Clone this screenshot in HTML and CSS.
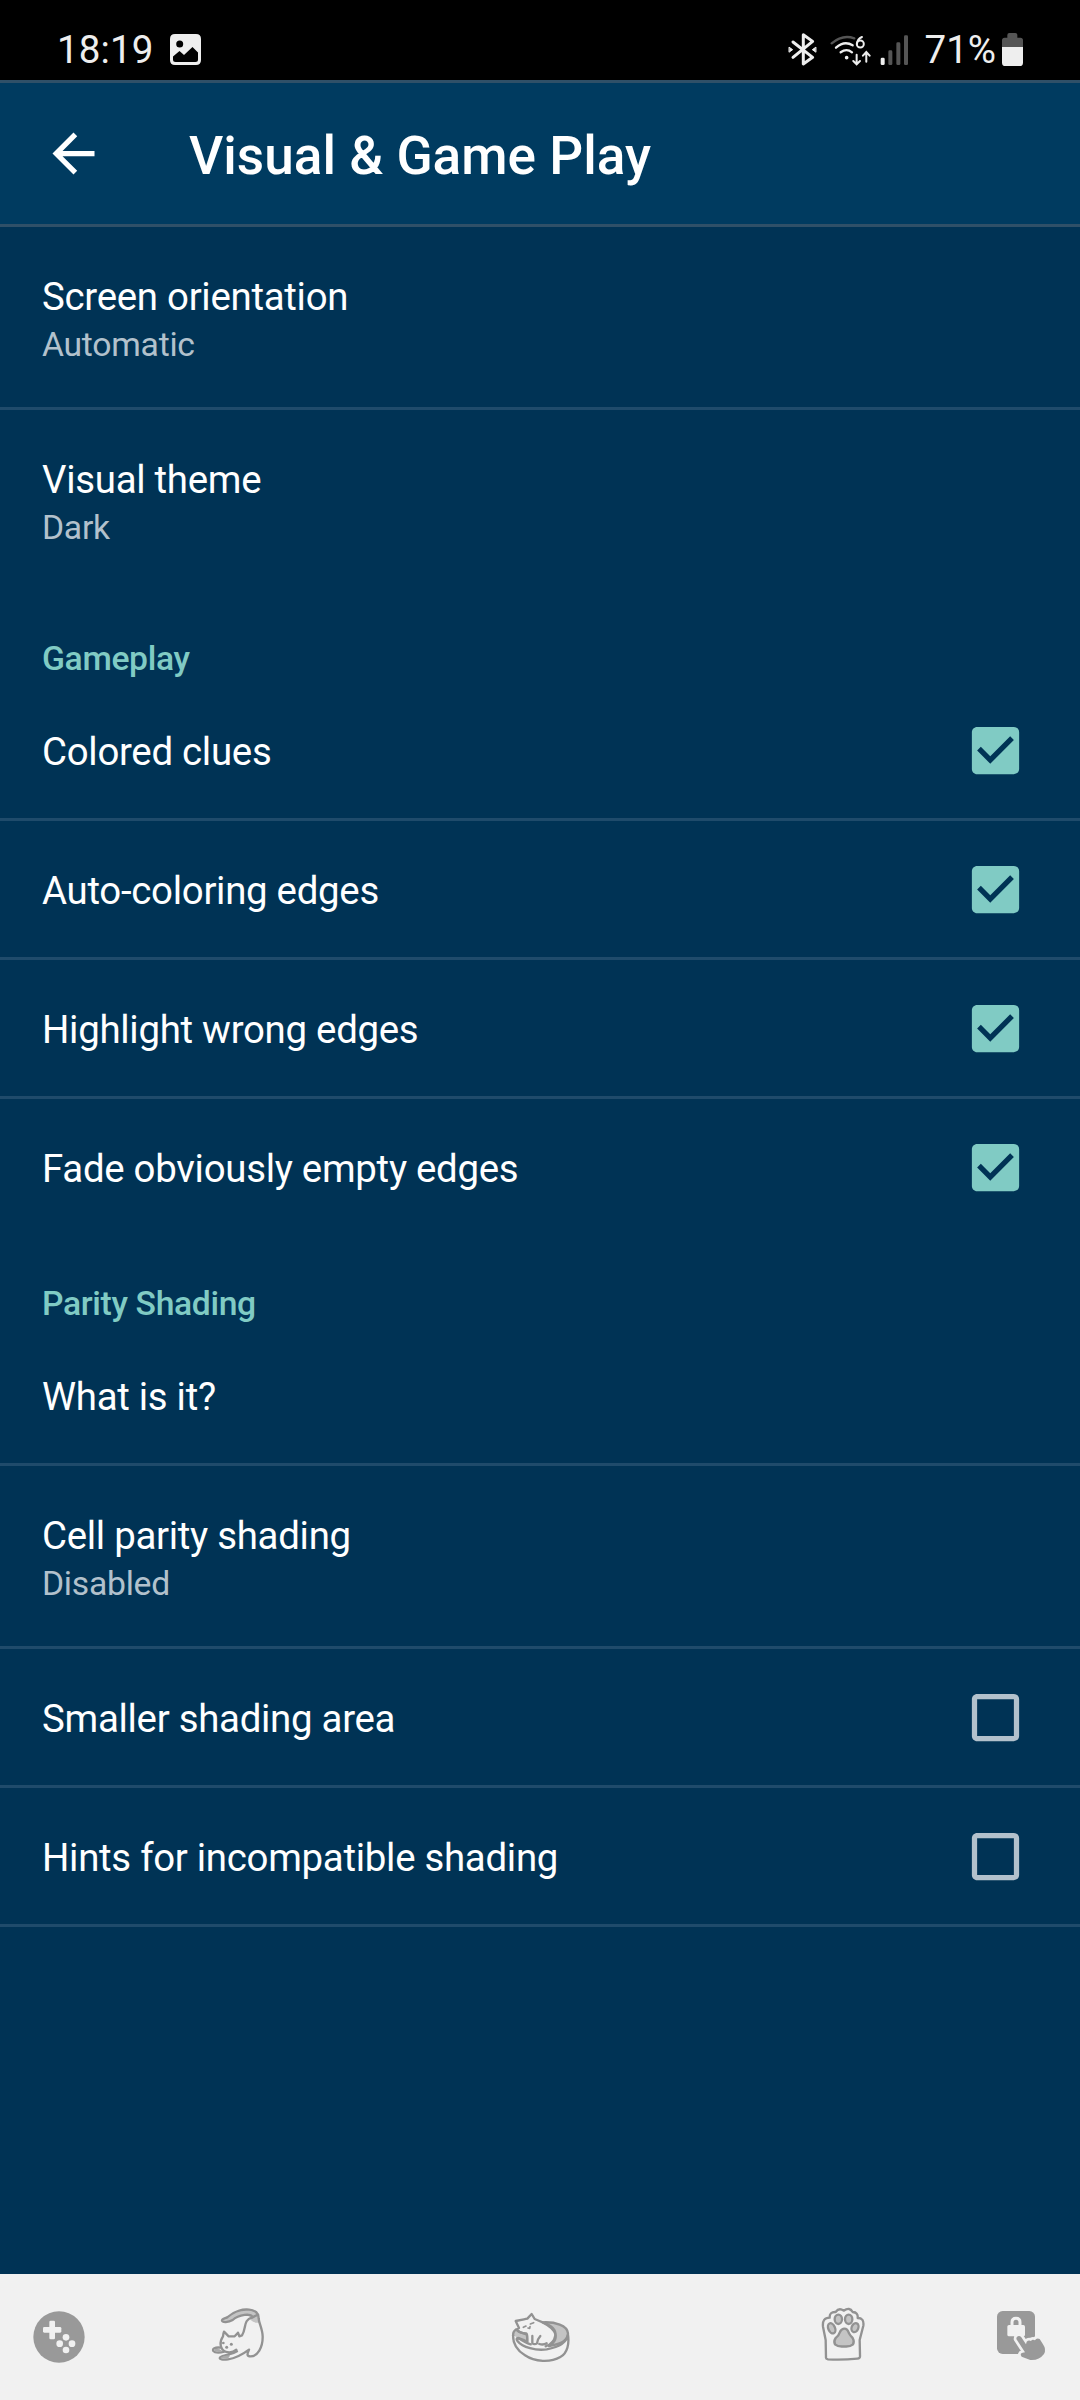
FILE: index.html
```html
<!DOCTYPE html>
<html lang="en">
<head>
<meta charset="utf-8">
<title>Visual &amp; Game Play</title>
<link rel="stylesheet" href="styles.css">
</head>
<body>
<div class="screen">
  <header class="status">
    <span class="status-text clock">18:19</span>
    <svg class="photo" viewBox="0 0 31 31"><path fill="#eee" fill-rule="evenodd" d="M5 0H26Q31 0 31 5V26Q31 31 26 31H5Q0 31 0 26V5Q0 0 5 0ZM9.700 6.500A3.500 3.500 0 1 0 9.700 13.500A3.500 3.500 0 1 0 9.700 6.500ZM3 22.500V25.500Q3 28 5.500 28H25.500Q28 28 28 25.500V18.500L22.500 13L14 21L9.500 17Z"/></svg>
    <div class="tray">
      <svg class="bluetooth" viewBox="84 96 88 104" fill="none" stroke="#eee" stroke-width="9" stroke-linejoin="round" stroke-linecap="round"><path d="M99 126L158 172L130 192V104L158 124L99 172"/><path fill="#eee" stroke-width="3" d="M88 142L98 149L88 156ZM167 142L157 149L167 156Z"/></svg>
      <svg class="wifi" viewBox="212 98 124 100" fill="none" stroke="#eee" stroke-width="7" stroke-linecap="round"><path stroke="#555" d="M217 129Q250 101 285 114"/><path d="M230 142Q255 120 280 135M244 156Q262 143 278 156"/><circle cx="262" cy="172" r="5.500" fill="#eee" stroke="none"/><path stroke-width="6" d="M308 110Q294 116 293 131"/><circle cx="303" cy="131" r="10.500" stroke-width="6"/><path stroke-width="6" d="M292 163V190M282 182L292 192L302 182M321 184V157M311 166L321 155L331 166"/></svg>
      <svg class="signal" viewBox="362 100 86 96"><rect x="364" y="171" width="12" height="22" rx="4" fill="#eee"/><g fill="#555"><rect x="387" y="149" width="12" height="44" rx="4"/><rect x="411" y="125" width="12" height="68" rx="4"/><rect x="434" y="104" width="12" height="89" rx="4"/></g></svg>
      <span class="status-text percent">71%</span>
      <svg class="battery" viewBox="726 99 63 99"><path fill="#555" d="M726 142V121Q726 113 734 113H742V105Q742 99 748 99H766Q772 99 772 105V113H781Q789 113 789 121V142Z"/><path fill="#eee" d="M726 141H789V188Q789 198 779 198H736Q726 198 726 188Z"/></svg>
    </div>
  </header>
  <div class="appbar">
    <svg class="back" viewBox="0 0 24 24"><path fill="#fff" d="M20 11H7.830l5.590-5.590L12 4l-8 8 8 8 1.410-1.410L7.830 13H20v-2z"/></svg>
    <h1 class="title">Visual &amp; Game Play</h1>
  </div>
  <main class="settings">
    <div class="row tall line"><div class="name">Screen orientation</div><div class="value">Automatic</div></div>
    <div class="row tall"><div class="name">Visual theme</div><div class="value">Dark</div></div>
    <h2 class="section">Gameplay</h2>
    <div class="row line"><div class="name">Colored clues</div><svg class="check on" viewBox="0 0 24 24"><path d="M19 3H5c-1.110 0-2 .9-2 2v14c0 1.100.89 2 2 2h14c1.110 0 2-.9 2-2V5c0-1.100-.89-2-2-2zm-9 14l-5-5 1.410-1.410L10 14.170l7.590-7.590L19 8l-9 9z"/></svg></div>
    <div class="row line"><div class="name">Auto-coloring edges</div><svg class="check on" viewBox="0 0 24 24"><path d="M19 3H5c-1.110 0-2 .9-2 2v14c0 1.100.89 2 2 2h14c1.110 0 2-.9 2-2V5c0-1.100-.89-2-2-2zm-9 14l-5-5 1.410-1.410L10 14.170l7.590-7.590L19 8l-9 9z"/></svg></div>
    <div class="row line"><div class="name">Highlight wrong edges</div><svg class="check on" viewBox="0 0 24 24"><path d="M19 3H5c-1.110 0-2 .9-2 2v14c0 1.100.89 2 2 2h14c1.110 0 2-.9 2-2V5c0-1.100-.89-2-2-2zm-9 14l-5-5 1.410-1.410L10 14.170l7.590-7.590L19 8l-9 9z"/></svg></div>
    <div class="row"><div class="name">Fade obviously empty edges</div><svg class="check on" viewBox="0 0 24 24"><path d="M19 3H5c-1.110 0-2 .9-2 2v14c0 1.100.89 2 2 2h14c1.110 0 2-.9 2-2V5c0-1.100-.89-2-2-2zm-9 14l-5-5 1.410-1.410L10 14.170l7.590-7.590L19 8l-9 9z"/></svg></div>
    <h2 class="section">Parity Shading</h2>
    <div class="row line"><div class="name">What is it?</div></div>
    <div class="row tall line"><div class="name">Cell parity shading</div><div class="value">Disabled</div></div>
    <div class="row line"><div class="name">Smaller shading area</div><svg class="check off" viewBox="0 0 24 24"><path d="M19 5v14H5V5h14m0-2H5c-1.100 0-2 .9-2 2v14c0 1.100.9 2 2 2h14c1.100 0 2-.9 2-2V5c0-1.100-.9-2-2-2z"/></svg></div>
    <div class="row line"><div class="name">Hints for incompatible shading</div><svg class="check off" viewBox="0 0 24 24"><path d="M19 5v14H5V5h14m0-2H5c-1.100 0-2 .9-2 2v14c0 1.100.9 2 2 2h14c1.100 0 2-.9 2-2V5c0-1.100-.9-2-2-2z"/></svg></div>
  </main>
  <nav class="navbar">
    <svg class="nav-icon" viewBox="87 141 180 180"><circle cx="177" cy="231" r="77" fill="#999"/><g fill="#f1f1f1"><rect x="148" y="182" width="17" height="56" rx="4"/><rect x="129" y="201" width="55" height="17" rx="4"/><circle cx="198" cy="232" r="10"/><circle cx="198" cy="270" r="10"/><circle cx="179" cy="251" r="10"/><circle cx="216" cy="251" r="10"/></g></svg>
    <svg class="nav-icon line-art" viewBox="624 141 180 180">
      <path class="shade-line" d="M745 162L774 162L776 188Q762 190 752 180Z"/>
      <path d="M774 164Q776 170 776 176C777 191 789 210 788 232C788 262 773 289 752 289C741 289 740 284 747 269C731 281 707 295 684 298C668 300 657 298 660 293C663 287 674 288 687 283"/>
      <path fill="#c4c4c4" d="M666 182C665 175 678 175 683 171C703 153 729 147 747 149Q768 151 774 164L757 172C757 158 715 164 698 180C685 188 667 188 666 182Z"/>
      <path d="M757 172C728 180 740 205 726 226L718 229L714 218L704 229H686L672 215Q670 219 669 229C657 246 660 267 676 275Q696 281 709 269M661 263C645 261 636 267 640 273C645 279 661 278 673 275M687 283Q700 281 711 274"/>
      <path class="shade" d="M641 270Q646 263 659 268L668 274Q650 280 641 270ZM661 294Q670 284 690 287L683 297Z"/>
      <g class="dots"><circle cx="670" cy="249" r="4"/><circle cx="694" cy="253" r="4.500"/><circle cx="680" cy="262" r="4.500"/></g>
    </svg>
    <svg class="nav-icon line-art" viewBox="90 81 180 180">
      <path fill="#c4c4c4" d="M188 127C225 125 262 136 264 160C264 187 229 195 207 198C218 192 231 179 226 162Q220 143 188 127Z"/>
      <path fill="#c4c4c4" d="M108 148Q97 156 100 169Q101 184 110 191Q106 176 118 175Q130 178 142 185L141 164L119 156Z"/>
      <path d="M110 149L117 144L107 123L132 118Q138 117 142 116L155 102L164 117Q177 122 188 127C216 136 229 151 226 166C223 184 211 194 197 199M110 149Q118 159 139 160Q143 166 141 188M157 168V190Q164 195 171 190Q172 178 181 168M178 192Q190 196 200 190"/>
      <path fill="#f1f1f1" d="M99 166C99 195 113 213 135 226C164 246 212 248 241 231C263 219 268 190 264 164C261 190 232 202 200 208C169 213 127 202 113 184Q106 175 115 174Q136 188 152 193"/>
      <path stroke-width="5" d="M130 142L138 138M151 132L161 128M144 144L149 145L150 140"/>
    </svg>
    <svg class="nav-icon line-art" viewBox="69 81 180 180">
      <path d="M108 234L107 180L99 140Q96 113 119 113Q118 95 137 96Q147 82 161 92Q179 80 188 96Q205 97 203 114Q223 114 220 137L209 180L210 226Q211 236 202 236Q158 240 114 238Q108 237 108 234Z"/>
      <g fill="#c4c4c4"><ellipse cx="145" cy="118" rx="11" ry="14"/><ellipse cx="176" cy="118" rx="11" ry="14"/><ellipse cx="125" cy="145" rx="10" ry="16" transform="rotate(-24 125 145)"/><ellipse cx="195" cy="143" rx="10" ry="14" transform="rotate(22 195 143)"/><path d="M162 146Q172 145 177 160Q181 168 188 174Q194 184 189 193Q180 201 162 199Q144 201 135 193Q130 184 137 174Q146 168 149 158Q153 147 162 146Z"/></g>
    </svg>
    <svg class="nav-icon" viewBox="606 81 180 180"><rect x="621" y="93" width="114" height="129" rx="17" fill="#999"/><path fill="none" stroke="#f1f1f1" stroke-width="9" d="M666 140V127Q666 115 678 115Q690 115 690 127V140"/><rect x="652" y="135" width="53" height="34" rx="5" fill="#f1f1f1"/><path fill="#999" stroke="#f1f1f1" stroke-width="16" stroke-linejoin="round" paint-order="stroke" d="M680 172Q687 164 694 172L708 193L710 185Q716 179 723 183Q727 177 735 181Q739 173 749 177L758 191Q770 208 762 222Q747 242 721 240L695 230Q688 220 698 218L705 217L679 177Z"/></svg>
  </nav>
</div>
</body>
</html>
```
FILE: styles.css
```css
* { box-sizing: border-box; }
body { margin: 0; background: #003355; font-family: Roboto, sans-serif; }
svg { display: block; flex: none; }
.screen { width: 1080px; height: 2400px; display: flex; flex-direction: column; background: #003355; color: #fff; }
.status { height: 80px; background: #000; display: flex; align-items: center; padding: 19px 57px 0 57px; }
.status-text { font-size: 38.5px; line-height: 44px; color: #eee; }
.clock { width: 113px; letter-spacing: 0.1px; }
.photo { width: 31px; height: 31px; }
.tray { display: flex; align-items: center; margin-left: auto; }
.bluetooth { width: 29.300px; height: 34.700px; }
.wifi { width: 41.300px; height: 33.300px; margin-left: 13.300px; }
.signal { width: 28.700px; height: 32px; margin-left: 8.700px; }
.percent { margin-left: 15.700px; }
.battery { width: 21px; height: 33px; margin-left: 6px; }
.appbar { height: 147px; background: #003b60; border-top: 3px solid #2f5068; border-bottom: 3px solid #2f5068; display: flex; align-items: center; padding-left: 42px; }
.back { width: 63px; height: 63px; }
.title { margin: 4px 0 0 84px; font-size: 53.150px; font-weight: 500; line-height: 62px; }
.settings { flex: 1; }
.row { height: 136px; padding: 0 52px 0 42px; display: flex; align-items: center; justify-content: space-between; }
.row.line { height: 139px; border-bottom: 3px solid #1f4b6b; }
.row.tall { height: 180px; flex-direction: column; align-items: flex-start; justify-content: center; padding-top: 2px; }
.row.tall.line { height: 183px; }
.name { font-size: 38.400px; letter-spacing: -0.280px; line-height: 50px; padding-top: 4px; }
.tall .name { padding: 2px 0 1px; }
.value { font-size: 33.700px; letter-spacing: -0.250px; line-height: 44px; color: #b2c1cc; }
.section { margin: 0; height: 92px; padding: 45px 42px 0; font-size: 33.700px; letter-spacing: -0.350px; line-height: 48px; font-weight: 500; color: #80cbc4; }
.check { width: 63px; height: 63px; margin-right: 0.600px; }
.check.on { fill: #80cbc4; }
.check.off { fill: #b2c1cc; }
.navbar { height: 126px; background: #f1f1f1; display: grid; grid-template-columns: 118px 240px 364px 242px 116px; align-items: center; justify-items: center; }
.nav-icon { width: 60px; height: 60px; }
.line-art { fill: none; stroke: #929292; stroke-width: 7; stroke-linejoin: round; stroke-linecap: round; }
.shade { fill: #aaa; stroke: none; }
.shade-line { fill: #c4c4c4; stroke: none; }
.dots { fill: #929292; stroke: none; }
```
